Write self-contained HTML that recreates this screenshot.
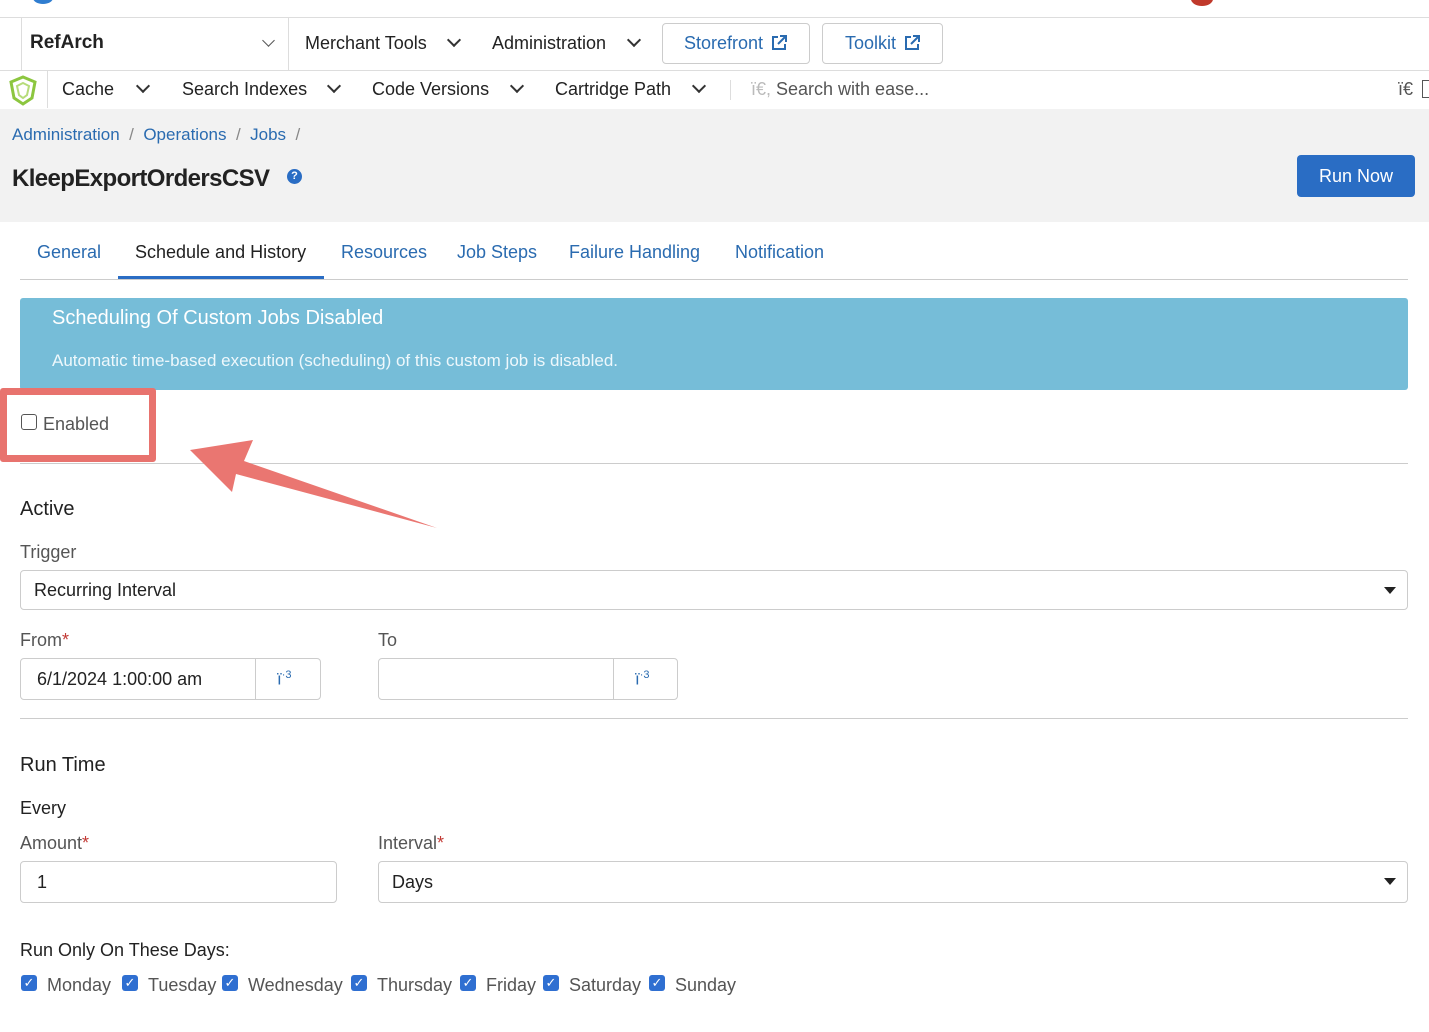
<!DOCTYPE html>
<html><head><meta charset="utf-8"><style>
*{box-sizing:border-box;margin:0;padding:0}
body{width:1429px;height:1032px;position:relative;background:#fff;font-family:"Liberation Sans",sans-serif;color:#222;overflow:hidden}
.a{position:absolute;white-space:nowrap}
.nav{font-size:18px;color:#222}
.chev{position:absolute;width:10px;height:10px;border-right:2px solid #333;border-bottom:2px solid #333;transform:rotate(45deg)}
.lbl{font-size:18px;color:#555}
.inp{position:absolute;border:1px solid #ccc;border-radius:4px;background:#fff}
.tab{font-size:18px;color:#2a6bb0;top:242px}
.cb{position:absolute;width:16px;height:16px;background:#2f6fd1;border-radius:3px;color:#fff;font-size:13px;line-height:16px;text-align:center}
.day{font-size:18px;color:#555;top:975px}
.tri{position:absolute;width:0;height:0;border-left:6px solid transparent;border-right:6px solid transparent;border-top:7px solid #222}
</style></head><body>
<div class="a" style="left:33px;top:-8px;width:20px;height:12px;border-radius:50%;background:#2f7dd0"></div>
<div class="a" style="left:1191px;top:-8px;width:22px;height:14px;border-radius:50%;background:#c0392b"></div>
<div class="a" style="left:0;top:17px;width:1429px;height:1px;background:#ddd"></div>
<div class="a" style="left:21px;top:18px;width:1px;height:52px;background:#ddd"></div>
<div class="a" style="left:288px;top:18px;width:1px;height:52px;background:#ddd"></div>
<div class="a nav" style="left:30px;top:32px;font-weight:bold;font-size:19px">RefArch</div>
<div class="chev" style="left:264px;top:36px;border-color:#555;width:9px;height:9px;border-width:1.5px"></div>
<div class="a nav" style="left:305px;top:33px">Merchant Tools</div>
<div class="chev" style="left:449px;top:35px"></div>
<div class="a nav" style="left:492px;top:33px">Administration</div>
<div class="chev" style="left:629px;top:35px"></div>
<div class="a" style="left:662px;top:23px;width:148px;height:41px;border:1px solid #ccc;border-radius:4px"></div>
<div class="a nav" style="left:684px;top:33px;color:#2a6bb0">Storefront</div>
<svg class="a" style="left:770px;top:34px" width="18" height="18" viewBox="0 0 18 18"><path d="M8 3H3v12h12v-5M10 2h6v6M16 2L8 10" fill="none" stroke="#2a6bb0" stroke-width="2"/></svg>
<div class="a" style="left:822px;top:23px;width:121px;height:41px;border:1px solid #ccc;border-radius:4px"></div>
<div class="a nav" style="left:845px;top:33px;color:#2a6bb0">Toolkit</div>
<svg class="a" style="left:903px;top:34px" width="18" height="18" viewBox="0 0 18 18"><path d="M8 3H3v12h12v-5M10 2h6v6M16 2L8 10" fill="none" stroke="#2a6bb0" stroke-width="2"/></svg>
<div class="a" style="left:0;top:70px;width:1429px;height:1px;background:#ddd"></div>
<div class="a" style="left:0;top:109px;width:1429px;height:113px;background:#f2f2f2"></div>
<svg class="a" style="left:8px;top:74px" width="30" height="32" viewBox="0 0 30 32"><path d="M15 3 L27 8 L24 24 L15 30 L6 24 L3 8 Z" fill="none" stroke="#8cc63f" stroke-width="3"/><path d="M15 9 L21 12 L19 21 L15 24 L11 21 L9 12 Z" fill="none" stroke="#b6dc7a" stroke-width="2"/></svg>
<div class="a" style="left:47px;top:71px;width:1px;height:37px;background:#ddd"></div>
<div class="a nav" style="left:62px;top:79px">Cache</div><div class="chev" style="left:138px;top:81px"></div>
<div class="a nav" style="left:182px;top:79px">Search Indexes</div><div class="chev" style="left:329px;top:81px"></div>
<div class="a nav" style="left:372px;top:79px">Code Versions</div><div class="chev" style="left:512px;top:81px"></div>
<div class="a nav" style="left:555px;top:79px">Cartridge Path</div><div class="chev" style="left:694px;top:81px"></div>
<div class="a" style="left:730px;top:80px;width:1px;height:20px;background:#ddd"></div>
<div class="a nav" style="left:751px;top:79px;color:#555"><span style="color:#bbb">ï€,</span> Search with ease...</div>
<div class="a nav" style="left:1398px;top:79px;color:#555">ï€</div>
<div class="a" style="left:1422px;top:80px;width:8px;height:18px;border:1px solid #555"></div>
<div class="a" style="left:12px;top:125px;font-size:17px;color:#2a6bb0">Administration <span style="color:#888">&nbsp;/&nbsp;</span> Operations <span style="color:#888">&nbsp;/&nbsp;</span> Jobs <span style="color:#888">&nbsp;/</span></div>
<div class="a" style="left:12px;top:165px;font-size:24px;color:#222;font-weight:bold;letter-spacing:-0.6px">KleepExportOrdersCSV</div>
<div class="a" style="left:287px;top:169px;width:15px;height:15px;border-radius:50%;background:#2a6dc4;color:#fff;font-size:11px;font-weight:bold;text-align:center;line-height:15px">?</div>
<div class="a" style="left:1297px;top:155px;width:118px;height:42px;background:#2a6dc4;border-radius:4px;color:#fff;font-size:18px;text-align:center;line-height:42px">Run Now</div>
<div class="a tab" style="left:37px">General</div>
<div class="a tab" style="left:135px;color:#222">Schedule and History</div>
<div class="a tab" style="left:341px">Resources</div>
<div class="a tab" style="left:457px">Job Steps</div>
<div class="a tab" style="left:569px">Failure Handling</div>
<div class="a tab" style="left:735px">Notification</div>
<div class="a" style="left:20px;top:279px;width:1388px;height:1px;background:#ccc"></div>
<div class="a" style="left:118px;top:276px;width:206px;height:3px;background:#2a6dc4"></div>
<div class="a" style="left:20px;top:298px;width:1388px;height:92px;background:#76bdd8;border-radius:3px"></div>
<div class="a" style="left:52px;top:307px;font-size:20px;color:#fff">Scheduling Of Custom Jobs Disabled</div>
<div class="a" style="left:52px;top:351px;font-size:17px;color:#eef8fc">Automatic time-based execution (scheduling) of this custom job is disabled.</div>
<div class="a" style="left:20px;top:463px;width:1388px;height:1px;background:#ccc"></div>
<div class="a" style="left:0;top:388px;width:156px;height:74px;border:7px solid #e8736e;border-radius:3px;background:#fff"></div>
<div class="a" style="left:21px;top:414px;width:16px;height:16px;border:1px solid #555;border-radius:3px"></div>
<div class="a lbl" style="left:43px;top:414px">Enabled</div>
<svg class="a" style="left:0;top:0" width="1429" height="1032"><polygon points="190,450 253,440 244,461 437,528 236,474 232,492" fill="#ea7671"/></svg>
<div class="a" style="left:20px;top:498px;font-size:20px;color:#222">Active</div>
<div class="a lbl" style="left:20px;top:542px">Trigger</div>
<div class="inp" style="left:20px;top:570px;width:1388px;height:40px"></div>
<div class="a" style="left:34px;top:580px;font-size:18px;color:#222">Recurring Interval</div>
<div class="tri" style="left:1384px;top:587px"></div>
<div class="a lbl" style="left:20px;top:630px">From<span style="color:#c23934">*</span></div>
<div class="a lbl" style="left:378px;top:630px">To</div>
<div class="inp" style="left:20px;top:658px;width:301px;height:42px"></div>
<div class="a" style="left:255px;top:659px;width:1px;height:40px;background:#ccc"></div>
<div class="a" style="left:37px;top:669px;font-size:18px;color:#222">6/1/2024 1:00:00 am</div>
<div class="a" style="left:277px;top:669px;font-size:17px;color:#2a6bb0">ï<sup style="font-size:11px">·3</sup></div>
<div class="inp" style="left:378px;top:658px;width:300px;height:42px"></div>
<div class="a" style="left:613px;top:659px;width:1px;height:40px;background:#ccc"></div>
<div class="a" style="left:635px;top:669px;font-size:17px;color:#2a6bb0">ï<sup style="font-size:11px">·3</sup></div>
<div class="a" style="left:20px;top:718px;width:1388px;height:1px;background:#ccc"></div>
<div class="a" style="left:20px;top:754px;font-size:20px;color:#222">Run Time</div>
<div class="a" style="left:20px;top:798px;font-size:18px;color:#222">Every</div>
<div class="a lbl" style="left:20px;top:833px">Amount<span style="color:#c23934">*</span></div>
<div class="a lbl" style="left:378px;top:833px">Interval<span style="color:#c23934">*</span></div>
<div class="inp" style="left:20px;top:861px;width:317px;height:42px"></div>
<div class="a" style="left:37px;top:872px;font-size:18px;color:#222">1</div>
<div class="inp" style="left:378px;top:861px;width:1030px;height:42px"></div>
<div class="a" style="left:392px;top:872px;font-size:18px;color:#222">Days</div>
<div class="tri" style="left:1384px;top:878px"></div>
<div class="a" style="left:20px;top:940px;font-size:18px;color:#222">Run Only On These Days:</div>
<div class="cb" style="left:21px;top:975px">✓</div><div class="a day" style="left:47px">Monday</div>
<div class="cb" style="left:122px;top:975px">✓</div><div class="a day" style="left:148px">Tuesday</div>
<div class="cb" style="left:222px;top:975px">✓</div><div class="a day" style="left:248px">Wednesday</div>
<div class="cb" style="left:351px;top:975px">✓</div><div class="a day" style="left:377px">Thursday</div>
<div class="cb" style="left:460px;top:975px">✓</div><div class="a day" style="left:486px">Friday</div>
<div class="cb" style="left:543px;top:975px">✓</div><div class="a day" style="left:569px">Saturday</div>
<div class="cb" style="left:649px;top:975px">✓</div><div class="a day" style="left:675px">Sunday</div>
</body></html>
